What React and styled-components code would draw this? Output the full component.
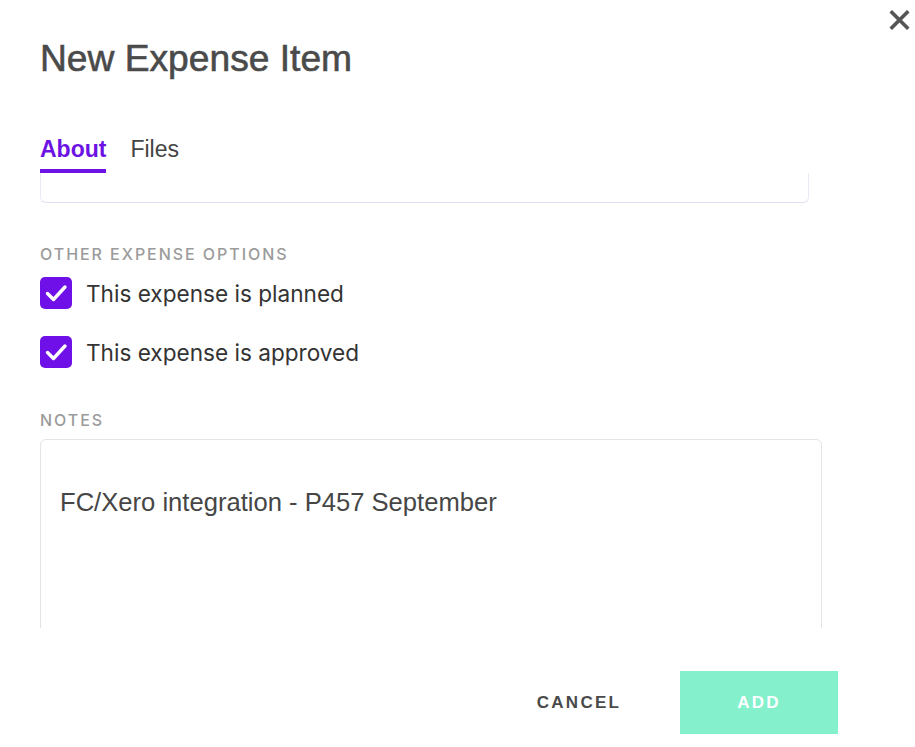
import styled, { createGlobalStyle } from "styled-components"
import { useState } from "react"

const GlobalStyle = createGlobalStyle`
  html, body {
    margin: 0;
    padding: 0;
    background: #ffffff;
  }
  * {
    box-sizing: border-box;
  }
`

//Modal shell
const StyledModal = styled.div`
  width: 915px;
  height: 747px;
  display: flex;
  flex-direction: column;
  background: #ffffff;
  font-family: "Liberation Sans", Arial, sans-serif;
  overflow: hidden;
`

const Header = styled.div`
  display: flex;
  justify-content: space-between;
  align-items: flex-start;
  padding: 10px 5px 0 40px;
`

const Title = styled.h1`
  margin: 26px 0 0;
  font-size: 37.2px;
  line-height: 44px;
  font-weight: 400;
  color: #4a4a4a;
  -webkit-text-stroke: 0.6px #4a4a4a;
`

const CloseButton = styled.button`
  width: 21px;
  height: 20px;
  padding: 0;
  border: none;
  background: none;
  cursor: pointer;
  display: flex;
`

const Tabs = styled.div`
  display: flex;
  gap: 24px;
  margin-top: 55px;
  padding-left: 40px;
`

const Tab = styled.div`
  font-size: 23px;
  line-height: 28px;
  padding-bottom: 6px;
  border-bottom: 4px solid ${(p) => (p.$active ? "#6c12e4" : "transparent")};
  color: ${(p) => (p.$active ? "#6c12e4" : "#444444")};
  font-weight: ${(p) => (p.$active ? 700 : 400)};
  cursor: pointer;
`

const ScrollArea = styled.div`
  height: 455px;
  overflow: hidden;
  padding: 0 40px;
`

const CutBox = styled.div`
  width: 769px;
  height: 30px;
  border: 1px solid #ece9f4;
  border-top: none;
  border-bottom-color: #e3def3;
  border-radius: 0 0 6px 6px;
`

const SectionLabel = styled.div`
  margin-top: ${(p) => p.$top}px;
  font-family: Inter, "Liberation Sans", sans-serif;
  font-size: 16px;
  line-height: 20px;
  font-weight: 500;
  letter-spacing: 1.95px;
  text-transform: uppercase;
  color: #9b9b9b;
`

const Options = styled.div`
  display: flex;
  flex-direction: column;
  gap: 27px;
  margin-top: 13px;
`

const OptionRow = styled.label`
  display: flex;
  align-items: center;
  gap: 14px;
  height: 32px;
  cursor: pointer;
`

const Box = styled.span`
  width: 32px;
  height: 32px;
  border-radius: 5px;
  background: ${(p) => (p.$checked ? "#6f10e8" : "#ffffff")};
  border: ${(p) => (p.$checked ? "none" : "2px solid #cccccc")};
  display: flex;
  align-items: center;
  justify-content: center;
  flex-shrink: 0;
`

const OptionText = styled.span`
  font-family: Inter, "Liberation Sans", sans-serif;
  font-size: 22.6px;
  color: #333333;
`

const NotesBox = styled.div`
  margin-top: 9px;
  width: 782px;
  height: 260px;
  border: 1px solid #e4e4e4;
  border-radius: 6px;
  padding: 47px 19px 0;
  font-size: 25.6px;
  line-height: 30px;
  color: #464646;
`

const Footer = styled.div`
  display: flex;
  justify-content: flex-end;
  gap: 22px;
  padding: 43px 77px 0 0;
`

const Button = styled.button`
  width: 158px;
  height: 63px;
  border: none;
  background: ${(p) => (p.$primary ? "#84f0cc" : "transparent")};
  color: ${(p) => (p.$primary ? "#ffffff" : "#4a4a4a")};
  font-family: "Liberation Sans", Arial, sans-serif;
  font-size: 17px;
  font-weight: 700;
  letter-spacing: 2.3px;
  cursor: pointer;
`

function Check() {
  return (
    <svg width="32" height="32" viewBox="0 0 32 32">
      <path d="M7.5 16.5 L13.5 22.5 L25 10" fill="none" stroke="#ffffff" strokeWidth="3.4" strokeLinecap="round" strokeLinejoin="round" />
    </svg>
  )
}

function App() {
  const [tab, setTab] = useState("about")
  const [planned, setPlanned] = useState(true)
  const [approved, setApproved] = useState(true)

  return (
    <StyledModal>
      <GlobalStyle />
      <Header>
        <Title>New Expense Item</Title>
        <CloseButton aria-label="close">
          <svg width="21" height="20" viewBox="0 0 21 20">
            <path d="M3 2.5 L18 17.5 M18 2.5 L3 17.5" stroke="#555555" strokeWidth="3.6" strokeLinecap="square" />
          </svg>
        </CloseButton>
      </Header>

      <Tabs>
        <Tab $active={tab === "about"} onClick={() => setTab("about")}>About</Tab>
        <Tab $active={tab === "files"} onClick={() => setTab("files")}>Files</Tab>
      </Tabs>

      <ScrollArea>
        <CutBox />
        <SectionLabel $top={41}>Other expense options</SectionLabel>
        <Options>
          <OptionRow onClick={() => setPlanned(!planned)}>
            <Box $checked={planned}>{planned && <Check />}</Box>
            <OptionText>This expense is planned</OptionText>
          </OptionRow>
          <OptionRow onClick={() => setApproved(!approved)}>
            <Box $checked={approved}>{approved && <Check />}</Box>
            <OptionText>This expense is approved</OptionText>
          </OptionRow>
        </Options>
        <SectionLabel $top={42}>Notes</SectionLabel>
        <NotesBox>FC/Xero integration - P457 September</NotesBox>
      </ScrollArea>

      <Footer>
        <Button>CANCEL</Button>
        <Button $primary>ADD</Button>
      </Footer>
    </StyledModal>
  )
}

export default App
